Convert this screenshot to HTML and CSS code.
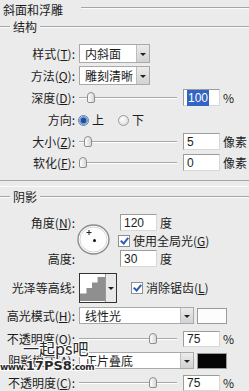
FILE: index.html
```html
<!DOCTYPE html>
<html lang="zh-CN">
<head>
  <meta charset="UTF-8" />
  <meta name="viewport" content="width=device-width, initial-scale=1.0" />
  <title>斜面和浮雕</title>
  <link rel="stylesheet" href="styles.css">
</head>
<body>
  <div class="panel">
    <div class="title"><span>斜面和浮雕</span><i class="rule"></i></div>
    <div class="group-head"><i class="rule stub"></i><span>结构</span><i class="rule"></i></div>

    <div class="row r-style">
      <span class="lbl">样式(<u>T</u>):</span>
      <div class="select short"><span>内斜面</span><b class="arrow"></b></div>
    </div>
    <div class="row r-method">
      <span class="lbl">方法(<u>Q</u>):</span>
      <div class="select short"><span>雕刻清晰</span><b class="arrow"></b></div>
    </div>
    <div class="row r-depth">
      <span class="lbl">深度(<u>D</u>):</span>
      <div class="slider"><i class="thumb" style="left: 8%"></i></div>
      <div class="field"><em class="sel">100</em></div>
      <span class="unit">%</span>
    </div>
    <div class="row r-dir">
      <span class="lbl">方向:</span>
      <i class="radio on"></i><span class="opt">上</span>
      <i class="radio"></i><span class="opt">下</span>
    </div>
    <div class="row r-size">
      <span class="lbl">大小(<u>Z</u>):</span>
      <div class="slider"><i class="thumb" style="left: 5%"></i></div>
      <div class="field">5</div>
      <span class="unit">像素</span>
    </div>
    <div class="row r-soft">
      <span class="lbl">软化(<u>F</u>):</span>
      <div class="slider"><i class="thumb" style="left: 0%"></i></div>
      <div class="field">0</div>
      <span class="unit">像素</span>
    </div>

    <i class="rule full"></i>
    <div class="group-head shade-head"><i class="rule stub"></i><span>阴影</span><i class="rule"></i></div>

    <div class="angle">
      <span class="lbl a-lbl">角度(<u>N</u>):</span>
      <div class="dial">
        <svg width="33" height="31" viewBox="0 0 33 31">
          <ellipse cx="16.5" cy="15.5" rx="15.5" ry="14.5" fill="#fdfdfd" stroke="#8c8c8c" stroke-width="1.4"/>
          <ellipse cx="16.5" cy="15.5" rx="13.5" ry="12.5" fill="none" stroke="#d6d6d6" stroke-width="1"/>
          <path d="M12 6v5M9.5 8.5h5" stroke="#222" stroke-width="1"/>
          <circle cx="17.5" cy="16.5" r="1.5" fill="#111"/>
        </svg>
      </div>
      <div class="a-val"><div class="field small">120</div><span class="unit">度</span></div>
      <div class="a-check"><i class="check"></i><span>使用全局光(<u>G</u>)</span></div>
      <span class="lbl h-lbl">高度:</span>
      <div class="h-val"><div class="field small">30</div><span class="unit">度</span></div>
    </div>

    <div class="row r-contour">
      <span class="lbl">光泽等高线:</span>
      <div class="contour">
        <svg width="27" height="28" viewBox="0 0 27 28">
          <rect width="27" height="28" fill="#fff"/>
          <path d="M0 28V20h7v-6h6V8h6V2h8v26z" fill="#8f8f8f"/>
        </svg>
        <b class="arrow"></b>
      </div>
      <div class="aa"><i class="check"></i><span>消除锯齿(<u>L</u>)</span></div>
    </div>

    <div class="row r-hmode">
      <span class="lbl">高光模式(<u>H</u>):</span>
      <div class="select long"><span>线性光</span><b class="arrow"></b></div>
      <i class="swatch white"></i>
    </div>
    <div class="row r-hop">
      <span class="lbl">不透明度(<u>O</u>):</span>
      <div class="slider"><i class="thumb" style="left: 71%"></i></div>
      <div class="field">75</div>
      <span class="unit">%</span>
    </div>
    <div class="row r-smode">
      <span class="lbl">阴影模式(<u>A</u>):</span>
      <div class="select long"><span>正片叠底</span><b class="arrow"></b></div>
      <i class="swatch black"></i>
    </div>
    <div class="row r-sop">
      <span class="lbl">不透明度(<u>C</u>):</span>
      <div class="slider"><i class="thumb" style="left: 71%"></i></div>
      <div class="field">75</div>
      <span class="unit">%</span>
    </div>

    <div class="mark">
      <span class="mark-cn">一起ps吧</span>
      <span class="mark-url">www.<b>17PS8</b>.com</span>
    </div>
  </div>
</body>
</html>
```

FILE: styles.css
```css
body {
  margin: 0;
  background: #ebebeb;
  font-family: "Noto Sans CJK SC", "Liberation Sans", sans-serif;
  font-size: 12px;
  color: #1c1c1c;
}
.panel {
  position: relative;
  width: 249px;
  height: 391px;
  overflow: hidden;
  display: flex;
  flex-direction: column;
}
u {
  text-decoration: underline;
  text-underline-offset: 1px;
}
.rule {
  display: block;
  flex: 1;
  height: 0;
  border-top: 1px solid #a6a6a6;
  border-bottom: 1px solid #fbfbfb;
}
.rule.stub {
  flex: none;
  width: 10px;
}
.rule.full {
  margin-top: 9px;
}
.title {
  height: 19px;
  display: flex;
  align-items: center;
  padding-left: 3px;
  line-height: 1;
}
.title .rule {
  margin-left: 18px;
  margin-top: -3px;
}
.group-head {
  height: 16px;
  display: flex;
  align-items: center;
  line-height: 1;
}
.group-head span {
  padding: 0 3px;
}
.shade-head {
  margin-top: 2px;
}
.row {
  display: flex;
  align-items: center;
  line-height: 1;
}
.lbl {
  width: 75px;
  flex: none;
  text-align: right;
  white-space: nowrap;
  margin-right: 4px;
}
.r-style { height: 19px; margin-top: 9px; }
.r-method { height: 19px; margin-top: 3px; }
.r-depth { height: 17px; margin-top: 4px; }
.r-dir { height: 16px; margin-top: 6px; }
.r-size { height: 17px; margin-top: 5px; }
.r-soft { height: 17px; margin-top: 4px; }
.r-contour { height: 30px; margin-top: 6px; }
.r-hmode { height: 17px; margin-top: 4px; }
.r-hop { height: 16px; margin-top: 7px; }
.r-smode { height: 17px; margin-top: 5px; }
.r-sop { height: 16px; margin-top: 6px; }

.select {
  height: 100%;
  box-sizing: border-box;
  display: flex;
  align-items: center;
  background: #fff;
  border: 1px solid #a9a9a9;
}
.select span {
  flex: 1;
  padding-left: 5px;
  white-space: nowrap;
}
.select.short { width: 71px; }
.select.long { width: 115px; }
.arrow {
  position: relative;
  width: 12px;
  height: 100%;
  flex: none;
  background: linear-gradient(#ececec, #d2d2d2);
  border-left: 1px solid #bdbdbd;
}
.arrow::after {
  content: "";
  position: absolute;
  left: 3px;
  top: 50%;
  margin-top: -1px;
  border-left: 3px solid transparent;
  border-right: 3px solid transparent;
  border-top: 3px solid #222;
}

.slider {
  position: relative;
  width: 98px;
  height: 12px;
  flex: none;
  margin-right: 6px;
}
.slider::before {
  content: "";
  position: absolute;
  left: 0;
  right: 0;
  top: 5px;
  border-top: 1px solid #a8a8a8;
  border-bottom: 1px solid #fff;
}
.thumb {
  position: absolute;
  top: 0;
  width: 8px;
  height: 11px;
  box-sizing: border-box;
  border: 1px solid #8d8d8d;
  border-radius: 4px 4px 2px 2px;
  background: linear-gradient(to right, #fdfdfd, #d7d7d7);
}

.field {
  width: 37px;
  height: 100%;
  box-sizing: border-box;
  display: flex;
  align-items: center;
  padding-left: 3px;
  background: #fff;
  border: 1px solid #9c9c9c;
  border-right-color: #d8d8d8;
  border-bottom-color: #d8d8d8;
  font-family: "Liberation Sans", sans-serif;
  font-size: 12px;
}
.field.small {
  height: 17px;
}
.sel {
  font-style: normal;
  background: #3264c4;
  color: #fff;
  padding: 2px 1px;
}
.unit {
  margin-left: 3px;
}

.radio {
  width: 11px;
  height: 11px;
  box-sizing: border-box;
  border-radius: 50%;
  border: 1px solid #9a9a9a;
  background: radial-gradient(circle at 40% 35%, #fff, #d4d4d4);
  margin-right: 3px;
}
.radio.on {
  background: radial-gradient(circle, #1f4f9a 0 2.5px, #6f9bd8 3px 4px, #e7eef8 4.5px);
  border-color: #6a7d99;
}
.opt + .radio {
  margin-left: 14px;
}
.r-dir .lbl {
  margin-right: 3px;
}

.check {
  position: relative;
  display: inline-block;
  width: 12px;
  height: 12px;
  box-sizing: border-box;
  border: 1px solid #8e8e8e;
  background: #fff;
  margin-right: 3px;
  flex: none;
}
.check::after {
  content: "";
  position: absolute;
  left: 3px;
  top: 0px;
  width: 3px;
  height: 6px;
  border-right: 2px solid #2c5fb5;
  border-bottom: 2px solid #2c5fb5;
  transform: rotate(40deg);
}

.angle {
  display: grid;
  grid-template-columns: 75px 43px 1fr;
  grid-template-rows: 17px 19px 17px;
  margin-top: 9px;
  line-height: 1;
}
.angle .lbl {
  align-self: center;
}
.a-lbl { grid-row: 1; grid-column: 1; }
.h-lbl { grid-row: 3; grid-column: 1; }
.dial {
  grid-row: 1 / 4;
  grid-column: 2;
  margin-top: 10px;
  margin-left: 2px;
}
.a-val, .h-val, .a-check {
  grid-column: 3;
  display: flex;
  align-items: center;
}
.a-val { grid-row: 1; margin-left: 2px; }
.a-check { grid-row: 2; }
.h-val { grid-row: 3; margin-left: 2px; }

.contour {
  height: 30px;
  width: 38px;
  box-sizing: border-box;
  display: flex;
  border: 1px solid #333;
  background: #fff;
}
.contour svg {
  display: block;
}
.contour .arrow {
  width: 10px;
  background: #e9e9e9;
  border-left: 1px solid #999;
}
.contour .arrow::after {
  left: 2px;
}
.aa {
  display: flex;
  align-items: center;
  margin-left: 14px;
}

.swatch {
  width: 30px;
  height: 16px;
  box-sizing: border-box;
  margin-left: 3px;
  border: 1px solid #9a9a9a;
}
.swatch.white { background: #fdfdfd; }
.swatch.black { background: #050505; }

.mark {
  position: absolute;
  left: 0;
  top: 340px;
  line-height: 1;
  color: #2a2a2a;
  text-shadow: 1px 1px 0 #fff, -1px -1px 0 #fff, 1px -1px 0 #fff, -1px 1px 0 #fff;
}
.mark-cn {
  display: block;
  margin-left: 23px;
  font-size: 16px;
}
.mark-url {
  display: block;
  margin-top: 3px;
  font-family: "DejaVu Sans", sans-serif;
  font-weight: bold;
  font-size: 9px;
  letter-spacing: -0.5px;
}
.mark-url b {
  font-size: 13px;
  letter-spacing: 0;
}
```
